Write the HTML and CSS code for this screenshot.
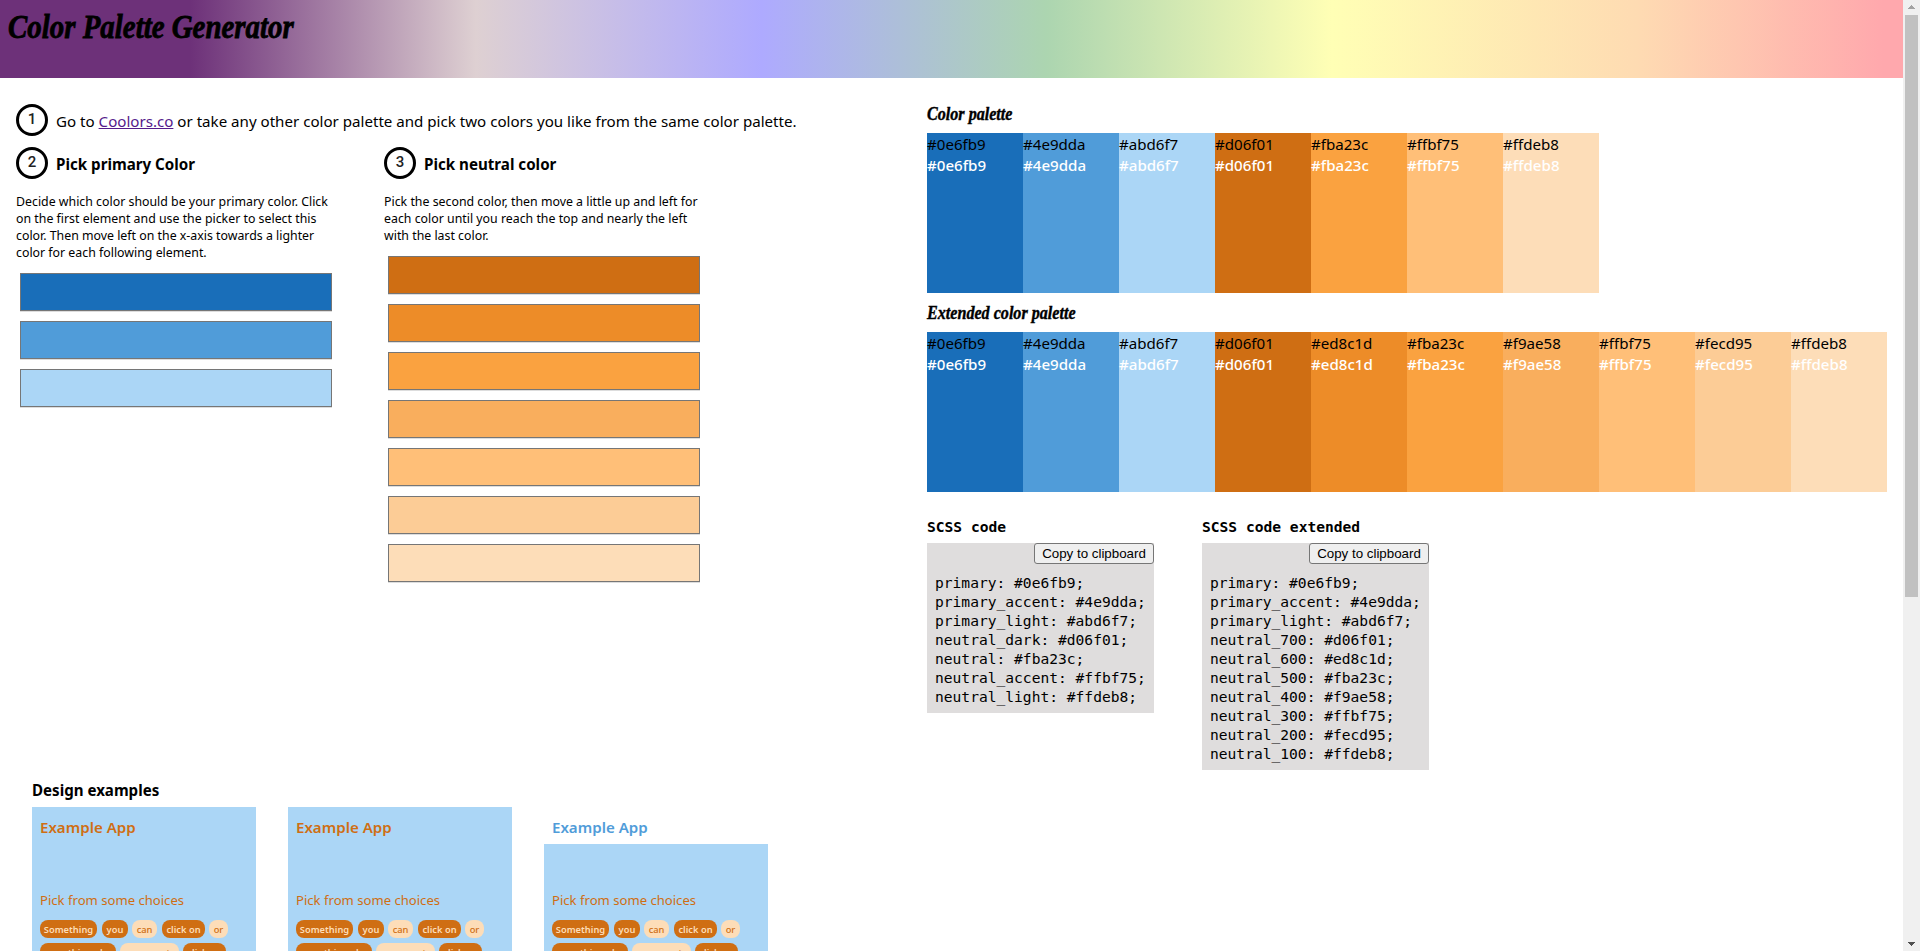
FILE: index.html
```html
<!DOCTYPE html>
<html lang="en">
<head>
<meta charset="utf-8">
<title>Color Palette Generator</title>
<link rel="stylesheet" href="styles.css">
</head>
<body>
<div class="page">
  <header class="header"><h1 class="title">Color Palette Generator</h1></header>
  <main class="main">
    <section class="steps">
      <div class="step"><span class="num">1</span><span class="intro">Go to <a href="#">Coolors.co</a> or take any other color palette and pick two colors you like from the same color palette.</span></div>
      <div class="pickers">
        <div class="picker">
          <div class="step"><span class="num">2</span><h2 class="step-title">Pick primary Color</h2></div>
          <p class="text">Decide which color should be your primary color. Click<br>on the first element and use the picker to select this<br>color. Then move left on the x-axis towards a lighter<br>color for each following element.</p>
          <div class="inputs"><i class="bar p1"></i><i class="bar p2"></i><i class="bar p3"></i></div>
        </div>
        <div class="picker">
          <div class="step"><span class="num">3</span><h2 class="step-title">Pick neutral color</h2></div>
          <p class="text">Pick the second color, then move a little up and left for<br>each color until you reach the top and nearly the left<br>with the last color.</p>
          <div class="inputs"><i class="bar n7"></i><i class="bar n6"></i><i class="bar n5"></i><i class="bar n4"></i><i class="bar n3"></i><i class="bar n2"></i><i class="bar n1"></i></div>
        </div>
      </div>
    </section>
    <section class="result">
      <h3 class="script"><span class="fit">Color palette</span></h3>
      <div class="palette">
        <div class="swatch p1">#0e6fb9<b>#0e6fb9</b></div><div class="swatch p2">#4e9dda<b>#4e9dda</b></div><div class="swatch p3">#abd6f7<b>#abd6f7</b></div><div class="swatch n7">#d06f01<b>#d06f01</b></div><div class="swatch n5">#fba23c<b>#fba23c</b></div><div class="swatch n3">#ffbf75<b>#ffbf75</b></div><div class="swatch n1">#ffdeb8<b>#ffdeb8</b></div>
      </div>
      <h3 class="script"><span class="fit">Extended color palette</span></h3>
      <div class="palette">
        <div class="swatch p1">#0e6fb9<b>#0e6fb9</b></div><div class="swatch p2">#4e9dda<b>#4e9dda</b></div><div class="swatch p3">#abd6f7<b>#abd6f7</b></div><div class="swatch n7">#d06f01<b>#d06f01</b></div><div class="swatch n6">#ed8c1d<b>#ed8c1d</b></div><div class="swatch n5">#fba23c<b>#fba23c</b></div><div class="swatch n4">#f9ae58<b>#f9ae58</b></div><div class="swatch n3">#ffbf75<b>#ffbf75</b></div><div class="swatch n2">#fecd95<b>#fecd95</b></div><div class="swatch n1">#ffdeb8<b>#ffdeb8</b></div>
      </div>
      <div class="codes">
        <div class="code"><h4 class="code-title">SCSS code</h4>
          <div class="code-box"><button class="copy">Copy to clipboard</button>
<pre class="pre">primary: #0e6fb9;
primary_accent: #4e9dda;
primary_light: #abd6f7;
neutral_dark: #d06f01;
neutral: #fba23c;
neutral_accent: #ffbf75;
neutral_light: #ffdeb8;</pre></div></div>
        <div class="code"><h4 class="code-title">SCSS code extended</h4>
          <div class="code-box"><button class="copy">Copy to clipboard</button>
<pre class="pre">primary: #0e6fb9;
primary_accent: #4e9dda;
primary_light: #abd6f7;
neutral_700: #d06f01;
neutral_600: #ed8c1d;
neutral_500: #fba23c;
neutral_400: #f9ae58;
neutral_300: #ffbf75;
neutral_200: #fecd95;
neutral_100: #ffdeb8;</pre></div></div>
      </div>
    </section>
  </main>
  <section class="examples">
    <h2 class="examples-title">Design examples</h2>
    <div class="apps">
      <div class="app"><div class="app-name">Example App</div><div class="app-body"><div class="choose">Pick from some choices</div>
        <div class="chips"><span class="chip w57">Something</span><span class="chip w26">you</span><span class="chip alt w25">can</span><span class="chip w43">click on</span><span class="chip alt w19">or</span></div>
        <div class="chips"><span class="chip w76">something else</span><span class="chip alt w59">you want</span><span class="chip w43">click on</span></div></div></div>
      <div class="app"><div class="app-name">Example App</div><div class="app-body"><div class="choose">Pick from some choices</div>
        <div class="chips"><span class="chip w57">Something</span><span class="chip w26">you</span><span class="chip alt w25">can</span><span class="chip w43">click on</span><span class="chip alt w19">or</span></div>
        <div class="chips"><span class="chip w76">something else</span><span class="chip alt w59">you want</span><span class="chip w43">click on</span></div></div></div>
      <div class="app"><div class="app-name plain">Example App</div><div class="app-body"><div class="choose">Pick from some choices</div>
        <div class="chips"><span class="chip w57">Something</span><span class="chip w26">you</span><span class="chip alt w25">can</span><span class="chip w43">click on</span><span class="chip alt w19">or</span></div>
        <div class="chips"><span class="chip w76">something else</span><span class="chip alt w59">you want</span><span class="chip w43">click on</span></div></div></div>
    </div>
  </section>
</div>
<div class="scrollbar">
  <svg class="arrow" width="17" height="15" shape-rendering="crispEdges"><path d="M5 9h7L8.500 5z" fill="#a3a3a3"/></svg>
  <div class="thumb"></div>
  <svg class="arrow down" width="17" height="17" shape-rendering="crispEdges"><path d="M5 8h7L8.500 12z" fill="#505050"/></svg>
</div>
</body>
</html>
```

FILE: styles.css
```css
* { box-sizing: border-box; }
body { margin: 0; height: 951px; overflow: hidden; display: flex; background: #fff; color: #000; font-family: "Noto Sans", sans-serif; }
h1, h2, h3, h4, p, pre { margin: 0; }
.page { width: 1903px; height: 951px; overflow: hidden; flex: none; }
.header { height: 78px; padding: 4px 8px; background: linear-gradient(90deg, #6d3179 0%, #6d3179 10%, #ded0d2 25%, #aeaaff 40%, #acd5b0 55%, #ffffb5 70%, #fedbb2 86%, #ffa8ad 99%); }
.title { display: inline-block; white-space: nowrap; font: italic bold 34px/46px "Liberation Serif", serif; transform-origin: 0 50%; transform: scaleX(.85); -webkit-text-stroke: .8px #000; }
.main { display: flex; height: 696px; padding-top: 24px; }
.steps { width: 927px; padding-left: 16px; }
.step { display: flex; align-items: center; height: 36px; }
.num { flex: none; width: 32px; height: 32px; margin-right: 8px; border: 3px solid #000; border-radius: 50%; font: 500 15px/25px Roboto, sans-serif; text-align: center; color: #222; }
.intro { font-size: 15.120px; white-space: nowrap; padding-top: 2px; }
.intro a { color: #551a8b; }
.pickers { display: flex; margin-top: 7px; }
.picker { width: 368px; }
.step-title { font-size: 15.150px; padding-top: 2px; }
.text { margin-top: 12px; font-size: 12.350px; line-height: 17px; white-space: nowrap; }
.inputs { display: grid; gap: 10px; margin: 12px 0 0 4px; }
.bar { width: 312px; height: 38px; border: 1px solid #767676; box-shadow: 0 1px 0 #ddd; }
.p1 { background: #196eb9; } .p2 { background: #509cd9; } .p3 { background: #abd6f6; }
.n7 { background: #cf6e13; } .n6 { background: #ed8c28; } .n5 { background: #faa240; } .n4 { background: #f9ae5d; }
.n3 { background: #ffbf78; } .n2 { background: #fccc96; } .n1 { background: #fdddb8; }
.script { height: 31px; white-space: nowrap; font: italic bold 18px/24px "Liberation Serif", serif; -webkit-text-stroke: .4px #000; }
.palette + .script { height: 39px; padding-top: 8px; }
.fit { display: inline-block; transform-origin: 0 50%; transform: scaleX(.895); }
.palette { display: flex; }
.swatch { width: 96px; height: 160px; padding-top: 1px; font-size: 15.100px; line-height: 21px; }
.swatch b { display: block; color: #fff; font-weight: 500; }
.codes { display: flex; gap: 48px; margin-top: 22px; }
.code { width: 227px; }
.code-title { height: 29px; padding-top: 1px; font: bold 14.600px/24px "DejaVu Sans Mono", monospace; white-space: nowrap; }
.code-box { background: #dfdddd; padding-bottom: 7px; }
.copy { display: block; width: 120px; height: 21px; margin-left: auto; padding: 0; border: 1px solid #767676; border-radius: 3px; background: #efefef; color: #000; font: 13.330px/17px "Liberation Sans", sans-serif; }
.pre { padding: 9px 8px 0; font: 14.600px/19px "DejaVu Sans Mono", monospace; }
.examples { padding: 4px 32px 0; }
.examples-title { height: 29px; font-size: 15.100px; line-height: 24px; }
.apps { display: flex; gap: 32px; }
.app { width: 224px; height: 260px; }
.app-name { height: 37px; padding: 8px; font-size: 15.100px; line-height: 24px; font-weight: 600; color: #cf6e13; background: #abd6f6; }
.plain { background: #fff; color: #509cd9; }
.app-body { height: 223px; padding: 43px 8px 0; background: #abd6f6; }
.choose { height: 33px; padding-top: 1px; font-size: 13.100px; line-height: 24px; color: #cf6e13; }
.chips { display: flex; gap: 4px; height: 23px; }
.chip { height: 18px; border-radius: 8px; background: #cf6e13; color: #fdddb8; font-size: 9.300px; font-weight: 600; line-height: 19px; text-align: center; white-space: nowrap; }
.alt { background: #fdddb8; color: #cf6e13; font-weight: 500; }
.w57 { width: 57px; margin-right: 1px; } .w26 { width: 26px; } .w25 { width: 25px; margin-right: 1px; } .w43 { width: 43px; } .w19 { width: 19px; } .w76 { width: 76px; } .w59 { width: 59px; }
.scrollbar { width: 17px; height: 951px; background: #f0f0f0; display: flex; flex-direction: column; flex: none; }
.arrow { display: block; flex: none; }
.thumb { width: 13px; height: 582px; margin: 0 2px; background: #c1c1c1; }
.down { margin-top: auto; }
```
